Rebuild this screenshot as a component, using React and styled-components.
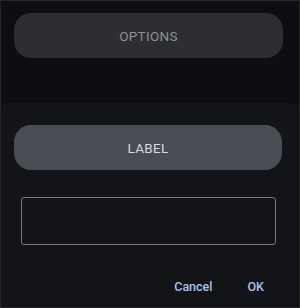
import React from 'react'
import styled, { createGlobalStyle } from 'styled-components'

const Global = createGlobalStyle`
    html, body {
        margin:0;
        padding:0;
        background:#0d0e11;
    }
    * { box-sizing:border-box; }
`

const Frame = styled.div`
    width:300px;
    height:308px;
    border:1px solid #25262a;
    background:#0d0e11;
    display:flex;
    flex-direction:column;
    font-family:Roboto, "Liberation Sans", sans-serif;
    overflow:hidden;
`
const Top = styled.div`
    height:102px;
    padding:12px 16px 0 13px;
`
const Pill = styled.div`
    height:${p => p.h}px;
    border-radius:17px;
    background:${p => p.bg};
    color:${p => p.fg};
    display:flex;
    align-items:center;
    justify-content:center;
    font-size:13.5px;
    font-weight:400;
    letter-spacing:0.3px;
`
const Dialog = styled.div`
    flex:1;
    background:#131418;
    border-radius:8px 8px 0 0;
    margin-right:2px;
    padding:22px 15px 0 13px;
    display:flex;
    flex-direction:column;
`
const Input = styled.div`
    margin:27px 6px 0 7px;
    height:48px;
    border:1px solid #76787d;
    border-radius:3px;
`
const Actions = styled.div`
    display:flex;
    justify-content:flex-end;
    gap:35px;
    padding:34px 18px 0 0;
`
const Action = styled.span`
    color:#a9c2ec;
    font-size:12.5px;
    font-weight:500;
`

export default function App() {
    return (
        <>
            <Global />
            <Frame>
                <Top>
                    <Pill h={45} bg="#2d2e32" fg="#8e9096">OPTIONS</Pill>
                </Top>
                <Dialog>
                    <Pill h={45} bg="#4a4c53" fg="#d6d8de">LABEL</Pill>
                    <Input />
                    <Actions>
                        <Action>Cancel</Action>
                        <Action>OK</Action>
                    </Actions>
                </Dialog>
            </Frame>
        </>
    )
}
